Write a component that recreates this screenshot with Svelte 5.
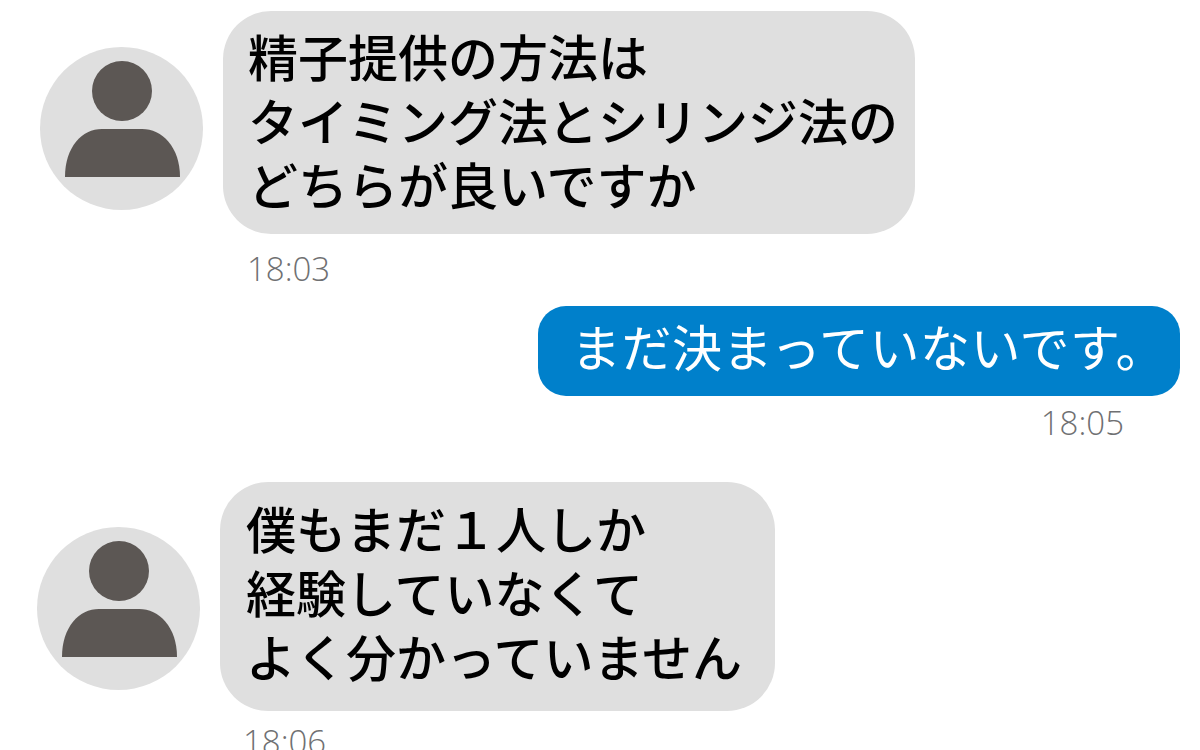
<script>
    const messages = [
        { id: 1, lines: ["精子提供の方法は", "タイミング法とシリンジ法の", "どちらが良いですか"], time: "18:03", indent: 40, avatarTop: 36 },
        { id: 2, mine: true, lines: ["まだ決まっていないです。"], time: "18:05" },
        { id: 3, lines: ["僕もまだ１人しか", "経験していなくて", "よく分かっていません"], time: "18:06", indent: 37, avatarTop: 45, last: true }
    ];
</script>

<div class="chat">
    {#each messages as m (m.id)}
        {#if m.mine}
            <div class="mine">
                <div class="bubble blue">{m.lines[0]}</div>
                <div class="time right">{m.time}</div>
            </div>
        {:else}
            <div class="theirs" style="padding-left: {m.indent}px">
                <svg class="avatar" style="margin-top: {m.avatarTop}px" viewBox="0 0 163 163" aria-hidden="true">
                    <circle cx="81.500" cy="81.500" r="81.500" fill="#dfdfdf" />
                    <ellipse cx="82" cy="44" rx="30" ry="30" fill="#5c5754" />
                    <path d="M25 130 C25 100 42 82 62 82 L102 82 C122 82 140 100 140 130 Z" fill="#5c5754" />
                </svg>
                <div class="column">
                    <div class="bubble grey" class:tall={m.last}>
                        {#each m.lines as line}
                            <div>{line}</div>
                        {/each}
                    </div>
                    <div class="time" class:close={m.last}>{m.time}</div>
                </div>
            </div>
        {/if}
    {/each}
</div>

<style>
    :global(body) {
        background: #fff;
    }
    .chat {
        height: 750px;
        overflow: hidden;
        box-sizing: border-box;
        padding-top: 11px;
        font-family: "Noto Sans CJK JP", "Noto Sans", sans-serif;
    }
    .theirs {
        display: flex;
        align-items: flex-start;
        gap: 20px;
    }
    .theirs + .mine {
        margin-top: 19px;
    }
    .mine + .theirs {
        margin-top: 41px;
    }
    .avatar {
        width: 163px;
        height: 163px;
        flex: none;
    }
    .column {
        display: flex;
        flex-direction: column;
        align-items: flex-start;
    }
    .bubble {
        box-sizing: border-box;
        white-space: nowrap;
    }
    .grey {
        background: #dfdfdf;
        color: #000;
        font-size: 50px;
        font-weight: 500;
        line-height: 64px;
        padding: 12px 17px 19px 25px;
        border-radius: 48px;
    }
    .tall {
        padding: 13px 33px 24px 26px;
    }
    .blue {
        background: #0080cb;
        color: #fff;
        font-size: 50px;
        letter-spacing: 0.5px;
        line-height: 78px;
        height: 90px;
        border-radius: 28px;
        padding: 0 14px 0 33px;
    }
    .mine {
        display: flex;
        flex-direction: column;
        align-items: flex-end;
        padding-right: 20px;
    }
    .time {
        font-family: "Open Sans", "Noto Sans", sans-serif;
        font-weight: 300;
        font-size: 33px;
        line-height: 36px;
        color: #6f7072;
        margin-top: 17px;
        margin-left: 24px;
    }
    .close {
        margin-top: 13px;
        margin-left: 23px;
    }
    .right {
        margin-top: 9px;
        margin-right: 56px;
    }
</style>
